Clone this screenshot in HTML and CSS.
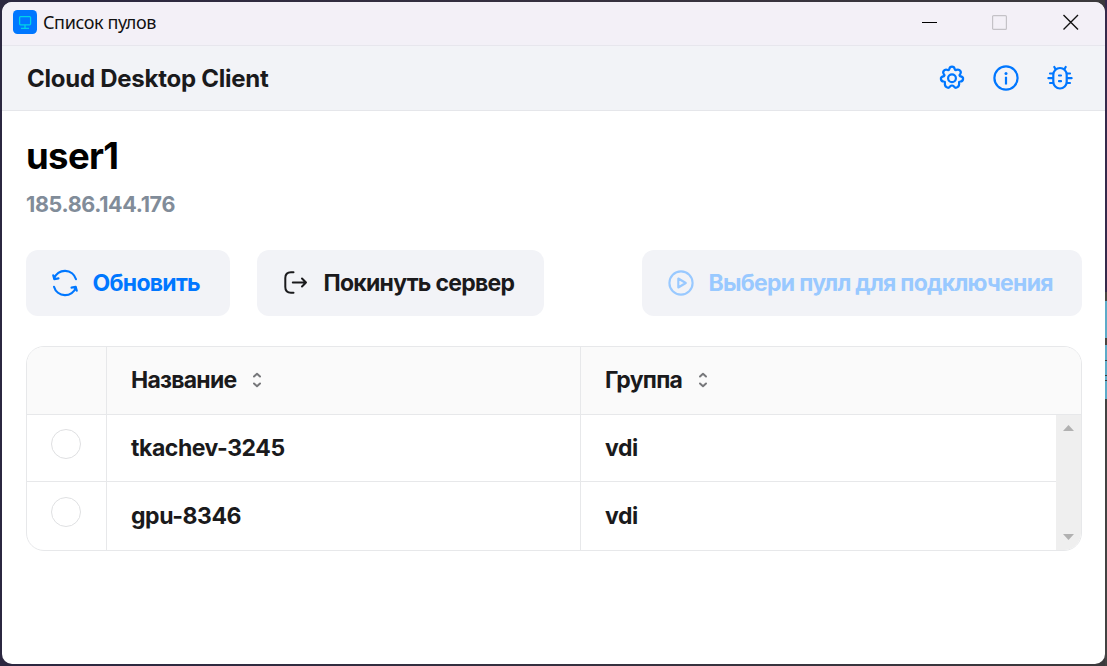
FILE: index.html
```html
<!DOCTYPE html>
<html lang="ru">
<head>
<meta charset="utf-8">
<title>Список пулов</title>
<link rel="stylesheet" href="styles.css">
</head>
<body>
<div class="desktop">
<div class="backdrop-strip"></div>
<div class="window">
  <div class="titlebar">
    <svg class="app-icon" width="24" height="24" viewBox="0 0 24 24"><rect width="24" height="24" rx="4.5" fill="#0077ff"/><g fill="none" stroke="#00d3e6" stroke-width="1.3"><rect x="6.6" y="6.6" width="11" height="8.2" rx="1"/><path d="M12 15v3.2M8 18.4h8"/></g></svg>
    <span class="window-title">Список пулов</span>
    <div class="controls">
      <svg width="16" height="16" viewBox="0 0 16 16"><path d="M1 8.500h15" stroke="#000"/></svg>
      <svg width="16" height="16" viewBox="0 0 16 16"><rect x=".6" y="1.6" width="13.8" height="13.8" rx="1" fill="none" stroke="#c4c2c7" stroke-width="1.2"/></svg>
      <svg width="16" height="16" viewBox="0 0 16 16"><path d="M.5 1l14.5 14.500M15 1L.5 15.500" stroke="#111" stroke-width="1.4"/></svg>
    </div>
  </div>
  <header class="header">
    <h1 class="brand">Cloud Desktop Client</h1>
    <nav class="tools">
      <svg width="28" height="28" viewBox="0 0 28 28" fill="none" stroke="#0077ff" stroke-width="2.2" stroke-linejoin="round"><path d="M11.200 5.300Q11.700 2.700 14 2.700T16.800 5.300Q17 6.400 18.300 5.900Q20.800 4.900 22.200 6.700T21.900 10.500Q21 11.200 22 12.100Q25.400 12.700 25.100 15T22.300 17.500Q20.900 17.500 21.100 18.800Q21.500 21.800 19.500 23.200T16 22.600Q14 20.400 12 22.600Q10.500 24.600 8.500 23.200T6.900 18.800Q7.100 17.500 5.700 17.500Q3.200 17.300 2.900 15T6 12.100Q7 11.200 6.100 10.500Q4.400 8.500 5.800 6.700T9.700 5.900Q11 6.400 11.200 5.300Z"/><circle cx="14" cy="14.300" r="3.900"/></svg>
      <svg width="28" height="28" viewBox="0 0 28 28" fill="none" stroke="#0077ff" stroke-width="2.2"><circle cx="14" cy="14" r="11.600"/><path d="M14 12.800v7.600" stroke-width="2.200"/><circle cx="14" cy="9.400" r="1.500" fill="#0077ff" stroke="none"/></svg>
      <svg width="28" height="28" viewBox="0 0 28 28" fill="none" stroke="#0077ff" stroke-width="2.2" stroke-linecap="round"><rect x="7.300" y="4" width="13.400" height="20.500" rx="6.700"/><path d="M9.500 5L8.300 3M18.500 5L19.700 3M7 9.500H4M7 14.200H2.400M7 19H4M21 9.500h3M21 14.200h4.600M21 19h3M13 11.500h2M13 17.200h2"/></svg>
    </nav>
  </header>
  <main class="content">
    <h2 class="user">user1</h2>
    <p class="address">185.86.144.176</p>
    <div class="actions">
      <button class="button refresh"><svg width="28" height="28" viewBox="0 0 28 28" fill="none" stroke="currentColor" stroke-width="2.1" stroke-linecap="round" stroke-linejoin="round"><path d="M3 9.700A11.500 11.500 0 0 1 25 10.300M2.200 6.200L3.300 10.200L7.500 9.400M25 18.300A11.500 11.500 0 0 1 3 17.700M25.800 21.800L24.700 17.800L20.500 18.600"/></svg><span>Обновить</span></button>
      <button class="button leave"><svg width="28" height="28" viewBox="0 0 28 28" fill="none" stroke="currentColor" stroke-width="2" stroke-linecap="round" stroke-linejoin="round"><path d="M11.500 3.300H9Q3.300 3.300 3.300 9V18Q3.300 23.700 9 23.700H11.500M10.800 13.500H24M20 9.500L24 13.500L20 17.500"/></svg><span>Покинуть сервер</span></button>
      <button class="button connect" disabled><svg width="28" height="28" viewBox="0 0 28 28" fill="none" stroke="currentColor" stroke-width="2.100" stroke-linejoin="round"><circle cx="14" cy="14" r="11.600"/><path d="M11.300 9.500V18.500L18.800 14Z"/></svg><span>Выбери пулл для подключения</span></button>
    </div>
    <section class="table">
      <div class="row head">
        <div class="cell"></div>
        <div class="cell"><span class="label-name">Название</span><svg class="sort" width="12" height="18" viewBox="0 0 12 18"><path d="M3 5.500L6 2.800L9 5.500M3 12.500L6 15.200L9 12.500"/></svg></div>
        <div class="cell"><span class="label-group">Группа</span><svg class="sort" width="12" height="18" viewBox="0 0 12 18"><path d="M3 5.500L6 2.800L9 5.500M3 12.500L6 15.200L9 12.500"/></svg></div>
      </div>
      <div class="body">
        <div class="rows">
          <div class="row"><div class="cell pick"><span class="radio"></span></div><div class="cell"><span class="pool">tkachev-3245</span></div><div class="cell"><span>vdi</span></div></div>
          <div class="row"><div class="cell pick"><span class="radio"></span></div><div class="cell"><span class="pool">gpu-8346</span></div><div class="cell"><span>vdi</span></div></div>
        </div>
        <div class="scrollbar"><svg width="11" height="6" viewBox="0 0 11 6"><path d="M0 6L5.500 0L11 6Z" fill="#b1b1b1"/></svg><svg width="11" height="6" viewBox="0 0 11 6"><path d="M0 0H11L5.500 6Z" fill="#b1b1b1"/></svg></div>
      </div>
    </section>
  </main>
</div>
</div>
</body>
</html>
```
FILE: styles.css
```css
* { box-sizing: border-box; }
body { margin: 0; overflow: hidden; }
h1, h2, p { margin: 0; }
svg { display: block; flex: none; }
.desktop {
  position: relative;
  width: 1107px;
  height: 666px;
  padding: 2px;
  background: linear-gradient(90deg, #2b2740, #35303f 50%, #3b393c);
  font-family: Inter, "Liberation Sans", sans-serif;
  font-weight: 650;
  color: #1a1a1c;
}
.backdrop-strip {
  position: absolute;
  right: 0;
  top: 0;
  width: 2px;
  height: 666px;
  background: linear-gradient(#35294b 0 292px, #484541 292px 301px, #5cabc9 301px 338px, #484541 338px 345px, #5cabc9 345px 360px, #343c40 360px 361px, #5cabc9 361px 375px, #343c40 375px 376px, #5cabc9 376px 380px, #343c40 380px 381px, #5cabc9 381px 399px, #434242 399px);
}
.window {
  height: 662px;
  border-radius: 10px;
  overflow: hidden;
  background: #fff;
}
.titlebar {
  height: 44px;
  display: flex;
  align-items: center;
  padding: 0 26px 3px 11px;
  background: #f3f0f7;
  border-bottom: 1px solid #e7e6ed;
}
.window-title {
  margin-left: 6px;
  font: 400 18px/24px "Noto Sans", "Open Sans", sans-serif;
  letter-spacing: -0.4px;
  color: #111;
}
.controls { display: flex; gap: 55px; margin-left: auto; }
.header {
  height: 65px;
  display: flex;
  align-items: center;
  justify-content: space-between;
  padding: 0 31px 0 25px;
  background: #f2f3f7;
  border-bottom: 1px solid #e5e6ea;
}
.brand { padding-top: 2px; font-size: 24px; line-height: 30px; font-weight: 650; letter-spacing: -0.25px; }
.tools { display: flex; gap: 26px; }
.content { padding: 23px 23px 0 24px; }
.user { font-size: 36.500px; line-height: 44px; font-weight: 650; letter-spacing: -0.6px; color: #000; }
.address { margin-top: 12px; font-size: 21.500px; line-height: 28px; letter-spacing: -0.35px; color: #818c99; }
.actions { display: flex; gap: 27px; margin-top: 32px; }
.button {
  display: flex;
  align-items: center;
  height: 66px;
  padding: 0 0 0 25px;
  border: 0;
  border-radius: 12px;
  background: #f2f3f7;
  font: inherit;
  font-size: 23px;
  letter-spacing: -0.73px;
  white-space: nowrap;
  color: #1a1a1c;
}
.button span { margin-left: 13.500px; }
.refresh { width: 204px; color: #0077ff; }
.leave { width: 287px; }
.connect { width: 440px; margin-left: auto; color: #99c9ff; }
.table {
  height: 205px;
  margin-top: 30px;
  border: 1px solid #e7e8ea;
  border-radius: 18px;
  overflow: hidden;
  font-size: 23px;
  letter-spacing: -0.45px;
}
.row { display: grid; grid-template-columns: 79px 474px 1fr; height: 66px; }
.head { height: 68px; background: #fafafa; border-bottom: 1px solid #e7e8ea; }
.cell {
  display: flex;
  align-items: center;
  padding-left: 24px;
  border-left: 1px solid #e7e8ea;
}
.head .cell { padding-bottom: 2px; letter-spacing: -0.75px; }
.cell:first-child { border-left: 0; }
.sort { margin-left: 15px; fill: none; stroke: #77787b; stroke-width: 2; stroke-linecap: round; stroke-linejoin: round; }
.body { display: flex; height: 135px; }
.rows { flex: 1; }
.rows .row + .row { height: 69px; border-top: 1px solid #e7e8ea; }
.pick { align-items: flex-start; padding-top: 14px; }
.row + .row .pick { padding-top: 15px; }
.radio { width: 30px; height: 30px; border: 1px solid #dfe0e2; border-radius: 50%; }
.scrollbar {
  display: flex;
  flex-direction: column;
  align-items: center;
  justify-content: space-between;
  width: 25px;
  padding: 10px 0;
  background: #efefef;
}
```
